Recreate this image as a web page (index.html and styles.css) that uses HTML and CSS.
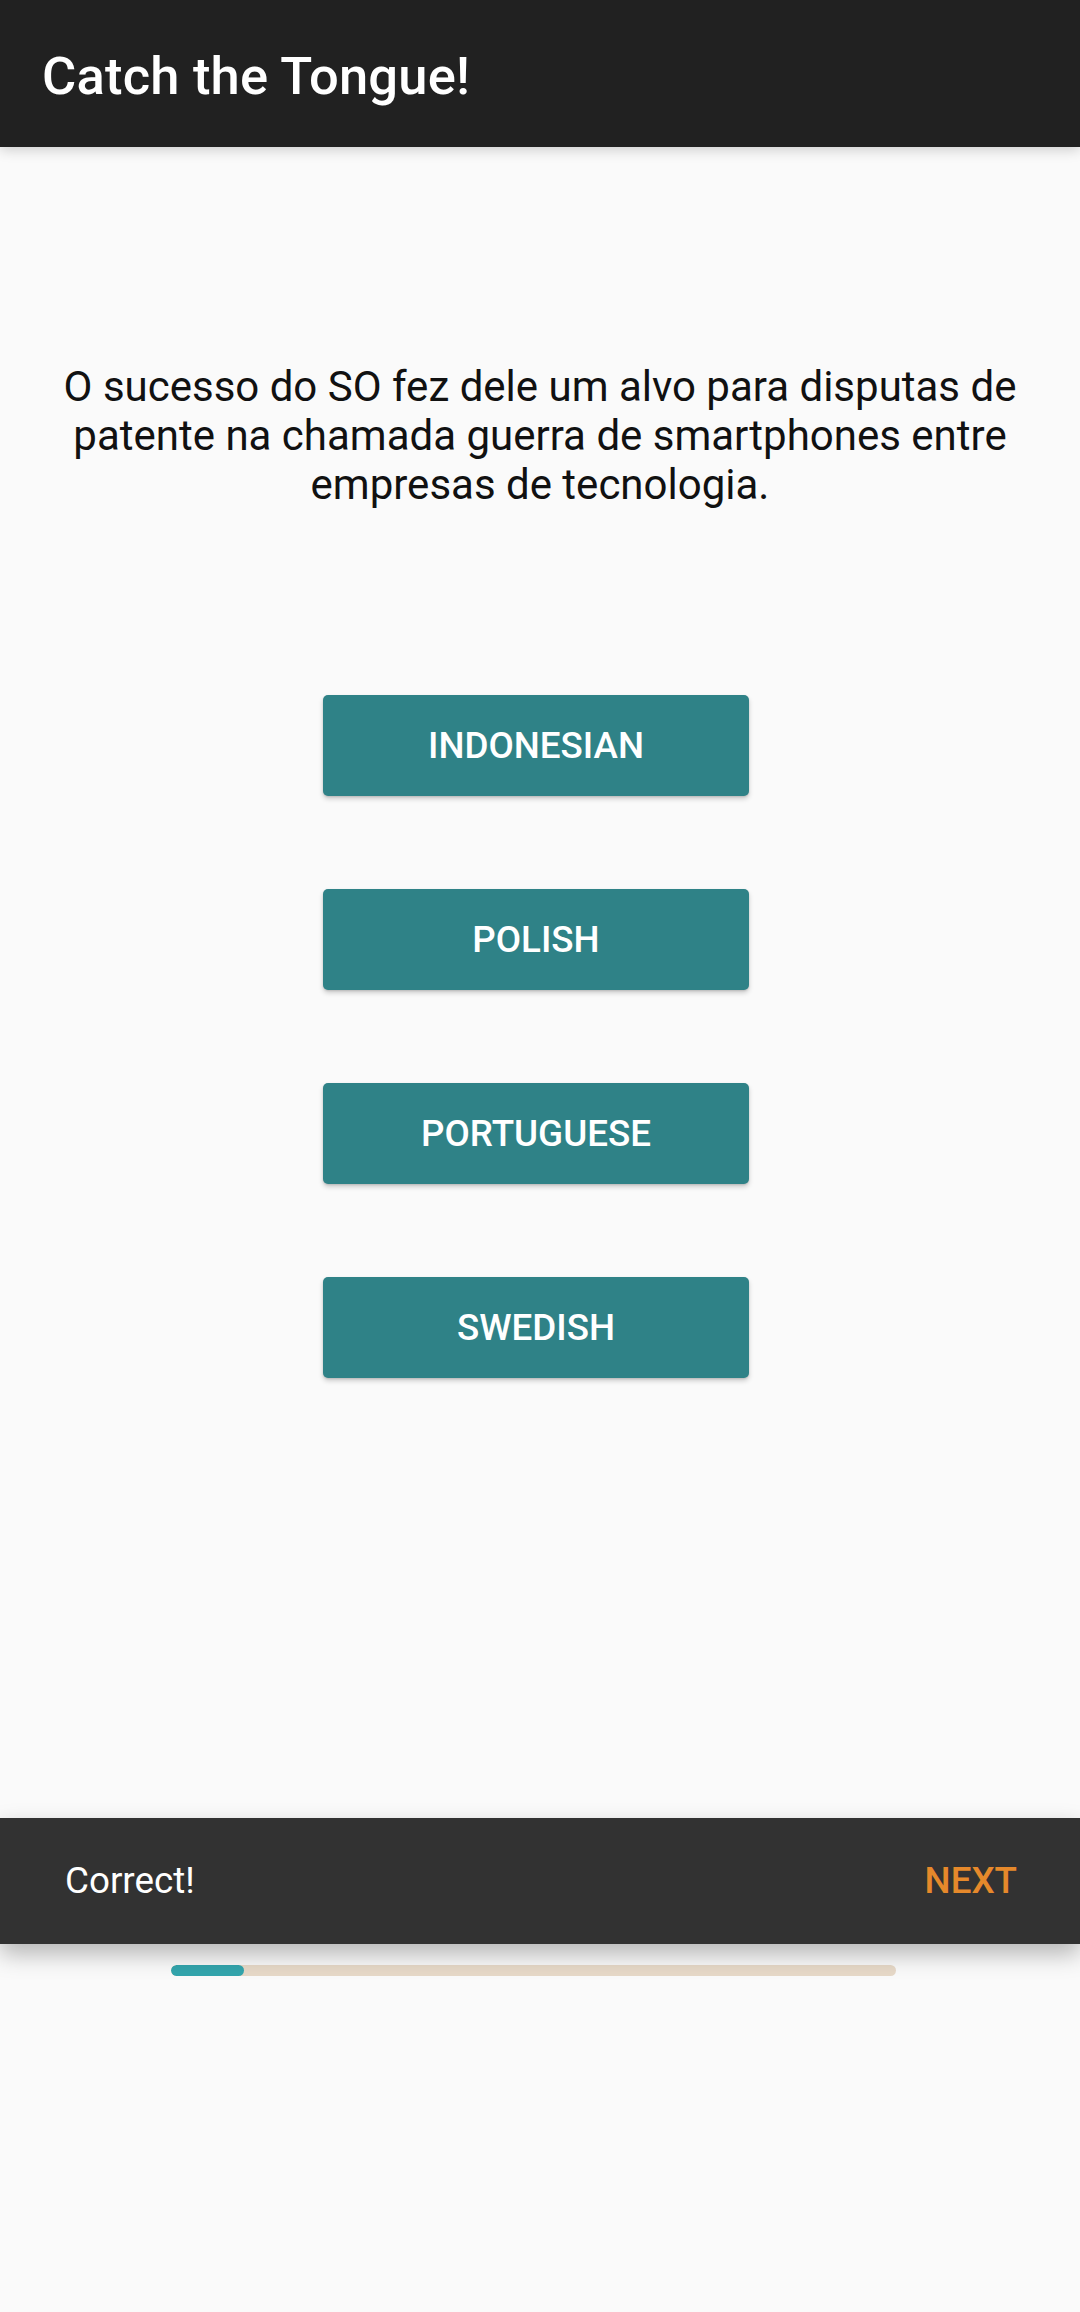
FILE: index.html
```html
<!DOCTYPE html>
<html lang="pt">
<head>
<meta charset="utf-8">
<title>Catch the Tongue!</title>
<link rel="stylesheet" href="styles.css">
</head>
<body>
<header class="appbar">
  <h1 class="appbar-title">Catch the Tongue!</h1>
</header>
<main class="quiz">
  <p class="question">O sucesso do SO fez dele um alvo para disputas de patente na chamada guerra de smartphones entre empresas de tecnologia.</p>
  <div class="options">
    <button class="option">INDONESIAN</button>
    <button class="option">POLISH</button>
    <button class="option">PORTUGUESE</button>
    <button class="option">SWEDISH</button>
  </div>
  <div class="snackbar">
    <span class="snack-text">Correct!</span>
    <span class="snack-action">NEXT</span>
  </div>
  <div class="progress">
    <div class="progress-fill" style="width: 73px"></div>
  </div>
</main>
</body>
</html>
```

FILE: styles.css
```css
html, body {
  margin: 0;
  padding: 0;
}
body {
  width: 1080px;
  height: 2312px;
  background: #fafafa;
  font-family: Roboto, "Noto Sans", "Liberation Sans", sans-serif;
  overflow: hidden;
}
.appbar {
  position: relative;
  z-index: 2;
  box-sizing: border-box;
  height: 147px;
  background: #212121;
  padding: 46px 42px 0;
  box-shadow: 0 3px 12px rgba(0, 0, 0, 0.18);
}
.appbar-title {
  margin: 0;
  font-size: 52.5px;
  line-height: 61.5px;
  font-weight: 500;
  letter-spacing: 0.2px;
  color: #ffffff;
}
.quiz {
  display: flex;
  flex-direction: column;
  align-items: center;
}
.question {
  margin: 215px 0 0;
  padding: 0 42px;
  box-sizing: border-box;
  width: 100%;
  text-align: center;
  font-size: 42px;
  line-height: 49.2px;
  color: #111111;
}
.options {
  margin-top: 185px;
  margin-right: 8px;
  display: flex;
  flex-direction: column;
  gap: 93px;
}
.option {
  width: 426px;
  height: 101px;
  border: none;
  border-radius: 5px;
  background: #2f8287;
  color: #ffffff;
  font-family: Roboto, "Noto Sans", "Liberation Sans", sans-serif;
  font-size: 36.75px;
  font-weight: 500;
  padding: 0;
  box-shadow: 0 3px 5px rgba(0, 0, 0, 0.18), 0 1px 2px rgba(0, 0, 0, 0.12);
}
.snackbar {
  margin-top: 440px;
  box-sizing: border-box;
  width: 100%;
  height: 126px;
  background: #323232;
  padding: 0 63px 0 65px;
  display: flex;
  align-items: center;
  justify-content: space-between;
  box-shadow: 0 10px 22px rgba(0, 0, 0, 0.28);
  position: relative;
  z-index: 1;
}
.snack-text {
  font-size: 36.75px;
  color: #ffffff;
}
.snack-action {
  font-size: 36.75px;
  font-weight: 500;
  color: #e6892b;
}
.progress {
  margin-top: 21px;
  margin-right: 13px;
  width: 725px;
  height: 11px;
  border-radius: 6px;
  background: #e7d9c8;
  overflow: hidden;
}
.progress-fill {
  height: 100%;
  border-radius: 6px;
  background: #33a5ad;
}
```
